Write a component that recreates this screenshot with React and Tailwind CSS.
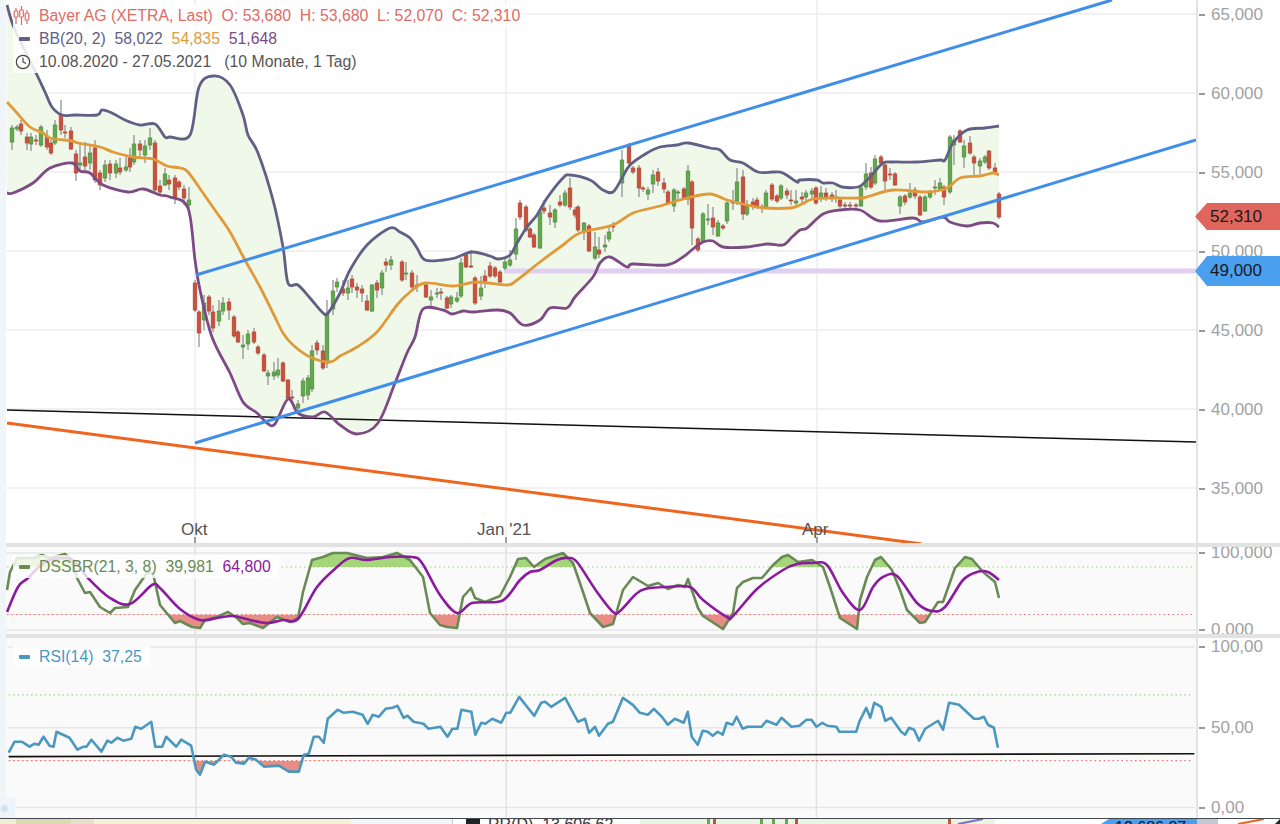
import React from 'react';
import { Clock } from 'lucide-react';

const upperBand = '7,5 15,30 37,75 45,92 52,107 62,115 75,115 97,115 102,110 112,113 125,120 140,125 155,124 165,137 170,137 190,135 199,87 213,76 230,85 243,115 248,135 258,153 273,200 283,247 288,283 298,285 310,298 323,313 328,313 340,293 350,270 367,245 390,228 400,232 410,238 417,248 425,260 443,260 455,258 472,252 490,256 498,259 510,255 517,243 527,227 537,215 547,198 563,178 570,175 590,180 603,190 613,192 622,178 630,165 647,153 660,147 677,145 688,143 710,148 720,150 730,160 743,163 758,172 773,172 783,173 797,182 800,180 817,180 823,183 833,183 842,187 858,187 865,182 872,175 883,163 893,162 917,162 940,160 945,160 953,143 967,130 985,128 999,126';
const middleBand = '7,102 17,113 30,127 43,133 50,138 72,141 78,143 100,147 113,152 133,157 153,159 167,166 180,168 188,172 203,193 217,213 230,232 245,260 260,287 273,313 283,333 293,345 310,357 330,362 340,356 357,347 377,332 397,305 410,292 425,283 453,286 477,282 507,285 517,280 540,262 563,245 580,233 613,225 633,213 660,206 687,198 710,194 727,200 747,205 765,208 790,208 800,205 813,199 833,198 860,198 870,196 893,190 927,192 947,188 960,178 980,176 993,173 999,175';
const lowerBand = '7,193 13,193 33,183 50,168 72,163 80,171 90,173 103,185 128,192 143,189 160,195 170,197 188,208 195,260 200,290 212,337 230,373 243,402 257,413 267,423 275,424 288,399 298,413 313,417 325,412 340,425 357,434 378,423 395,383 407,353 415,337 423,309 443,310 452,314 463,311 473,312 497,310 510,313 523,325 540,320 550,308 567,308 575,297 593,277 600,263 610,257 627,267 633,264 667,265 683,257 693,249 703,242 713,241 723,247 747,247 767,244 783,245 792,237 800,230 807,228 823,214 840,210 860,210 880,221 913,218 923,222 943,217 950,222 967,226 980,223 993,223 999,227';
const bandFill = upperBand + ' ' + lowerBand.split(' ').reverse().join(' ');

const dssFast = '7,590 10,572 17,558 33,558 42,555 50,558 65,554 72,560 77,578 85,593 90,592 100,607 110,613 115,608 128,607 135,590 147,573 153,573 160,605 170,617 175,623 180,621 192,627 200,628 205,620 217,617 228,612 237,618 243,624 250,623 263,628 277,617 290,622 298,618 303,592 312,560 323,557 333,553 347,553 367,558 383,557 397,553 410,560 423,577 430,613 440,625 447,627 457,628 463,597 471,588 475,598 485,602 500,596 510,577 518,559 526,558 534,567 545,559 563,553 573,563 583,592 590,613 603,627 613,624 623,590 633,577 648,586 658,583 668,589 678,585 685,587 688,579 698,608 703,616 723,629 733,613 737,588 743,582 753,578 762,578 773,565 782,557 788,555 798,562 812,560 823,567 830,587 840,618 857,629 860,600 867,577 875,560 881,557 892,570 900,590 907,610 920,623 925,622 938,602 943,602 955,568 965,557 972,559 983,572 995,582 999,598';
const dssSlow = '7,612 18,587 28,578 45,562 65,558 75,562 88,578 110,598 130,604 152,585 160,588 180,609 200,620 217,618 233,616 250,620 267,623 283,620 298,619 317,587 337,567 350,558 367,560 390,557 412,557 422,563 440,595 457,613 472,603 497,602 507,597 520,580 530,572 540,570 557,560 568,558 577,562 597,592 613,612 620,611 635,595 645,589 667,587 690,587 703,600 727,617 733,616 757,589 783,570 797,564 813,563 827,565 843,593 860,610 873,587 883,577 897,576 917,603 932,611 945,607 963,580 977,572 988,572 999,580';
const rsiLine = '7,753 13,742 20,742 28,747 33,744 37,745 42,737 48,746 52,747 55,732 68,738 76,750 82,747 85,747 90,740 100,752 106,741 110,743 116,738 122,741 130,739 134,727 140,729 150,722 154,747 161,747 165,737 175,747 180,740 190,746 195,770 199,775 204,762 213,765 223,755 230,757 235,763 243,764 248,758 255,760 263,767 278,766 288,772 298,772 303,755 308,754 313,737 318,737 323,743 327,719 337,710 343,713 352,712 362,715 367,724 372,715 378,717 385,709 392,708 397,706 403,718 407,716 413,722 423,724 428,729 440,727 447,737 452,729 457,729 461,710 471,712 475,735 481,723 485,724 492,719 501,723 506,713 510,713 519,697 534,716 541,703 545,702 551,707 565,698 578,722 585,719 589,733 595,727 599,736 608,724 613,722 623,698 633,705 640,713 648,715 654,709 662,717 668,725 675,719 684,723 688,712 692,737 698,745 703,731 708,732 713,736 718,732 723,735 727,723 733,725 737,717 743,729 748,727 762,727 767,721 777,725 782,718 792,727 800,726 807,720 812,720 817,727 823,723 828,726 837,727 840,732 857,732 860,722 867,708 871,718 875,703 882,707 886,721 892,718 902,732 906,735 910,728 915,730 920,741 926,729 939,721 944,730 950,703 960,705 975,719 980,719 985,717 989,725 995,728 999,748';

// curve through the points, the bands are rounded in the chart
const smooth = (line) => {
  const pts = line.split(' ').map((p) => p.split(',').map(Number));
  let d = `M${pts[0][0]} ${pts[0][1]}`;
  for (let i = 0; i < pts.length - 1; i++) {
    const a = pts[i - 1] || pts[i];
    const b = pts[i];
    const c = pts[i + 1];
    const e = pts[i + 2] || c;
    d += `C${b[0] + (c[0] - a[0]) / 6} ${b[1] + (c[1] - a[1]) / 6} ${c[0] - (e[0] - b[0]) / 6} ${c[1] - (e[1] - b[1]) / 6} ${c[0]} ${c[1]}`;
  }
  return d;
};

// x, wick top, body top, body bottom, wick bottom, rising
const candles = [
  [12, 125, 128, 142, 150, 1], [17, 125, 127, 129, 131, 1], [21, 120, 124, 131, 135, 0], [27, 133, 137, 143, 150, 0], [31, 133, 137, 144, 151, 1],
  [36, 135, 140, 141, 145, 0], [41, 125, 127, 145, 147, 1], [47, 130, 136, 147, 150, 0], [51, 140, 143, 153, 155, 0], [55, 120, 125, 143, 145, 1],
  [61, 100, 115, 130, 135, 0], [65, 125, 132, 133, 138, 0], [71, 127, 131, 149, 150, 0], [76, 150, 154, 173, 181, 0], [80, 142, 163, 165, 170, 1],
  [85, 142, 157, 166, 170, 0], [90, 145, 153, 163, 170, 1], [95, 140, 148, 180, 183, 0], [100, 170, 173, 185, 190, 0], [105, 160, 165, 178, 182, 1],
  [110, 160, 164, 173, 180, 0], [116, 160, 164, 173, 178, 1], [120, 158, 168, 172, 175, 0], [126, 155, 167, 170, 172, 1], [130, 148, 158, 167, 172, 0],
  [134, 135, 144, 162, 165, 1], [140, 140, 144, 150, 158, 0], [145, 140, 146, 155, 163, 1], [150, 128, 138, 145, 150, 1], [155, 140, 143, 190, 192, 0],
  [160, 180, 186, 192, 195, 0], [165, 168, 174, 185, 186, 1], [169, 175, 180, 184, 190, 0], [175, 175, 178, 197, 204, 0], [179, 180, 182, 187, 190, 0],
  [184, 185, 189, 198, 205, 0], [189, 187, 200, 205, 208, 1], [195, 280, 283, 310, 312, 0], [199, 310, 312, 333, 347, 0], [204, 295, 303, 320, 330, 1],
  [209, 295, 297, 311, 315, 0], [213, 305, 312, 328, 332, 0], [219, 300, 311, 321, 326, 1], [223, 297, 303, 311, 315, 1], [229, 298, 302, 310, 320, 0],
  [234, 315, 317, 336, 338, 0], [238, 330, 332, 342, 343, 0], [243, 335, 345, 347, 359, 1], [248, 330, 334, 344, 350, 1], [254, 328, 332, 342, 344, 0],
  [258, 345, 347, 353, 355, 0], [264, 353, 355, 371, 372, 0], [268, 370, 373, 376, 385, 1], [274, 362, 372, 376, 380, 1], [278, 358, 370, 375, 378, 1],
  [283, 361, 363, 381, 382, 0], [288, 379, 380, 398, 400, 0], [292, 390, 397, 398, 400, 0], [298, 400, 404, 408, 410, 1], [303, 378, 381, 396, 403, 1],
  [308, 375, 378, 395, 400, 1], [312, 345, 351, 389, 392, 1], [317, 340, 343, 350, 355, 0], [323, 345, 351, 368, 370, 0], [327, 300, 313, 363, 368, 1],
  [333, 280, 291, 309, 315, 1], [337, 278, 282, 287, 292, 1], [343, 280, 289, 293, 296, 0], [348, 280, 288, 293, 300, 1], [352, 275, 279, 287, 293, 0],
  [357, 283, 287, 290, 298, 0], [362, 285, 289, 293, 302, 0], [367, 295, 301, 310, 311, 0], [372, 284, 285, 311, 312, 1], [377, 280, 283, 290, 298, 0],
  [382, 270, 273, 288, 295, 1], [386, 258, 262, 265, 272, 0], [391, 256, 260, 265, 270, 1], [402, 260, 262, 280, 282, 0], [406, 262, 273, 274, 280, 1],
  [412, 270, 273, 287, 290, 0], [417, 275, 285, 286, 292, 0], [426, 283, 285, 297, 298, 0], [431, 290, 297, 300, 306, 1], [437, 288, 293, 294, 298, 1],
  [441, 288, 292, 293, 300, 0], [447, 296, 298, 308, 309, 0], [451, 295, 297, 304, 308, 1], [457, 292, 298, 301, 303, 1], [461, 258, 263, 296, 298, 1],
  [466, 252, 255, 267, 268, 0], [471, 250, 266, 267, 268, 0], [475, 276, 278, 303, 305, 0], [481, 276, 288, 296, 300, 1], [485, 270, 276, 282, 288, 0],
  [490, 262, 266, 276, 278, 0], [495, 266, 268, 276, 278, 0], [500, 270, 272, 282, 283, 0], [505, 258, 262, 268, 270, 1], [510, 250, 260, 265, 267, 1],
  [516, 218, 229, 254, 260, 1], [520, 200, 203, 217, 220, 0], [526, 205, 207, 230, 232, 0], [530, 227, 229, 237, 238, 0], [534, 233, 235, 247, 248, 0],
  [540, 210, 212, 248, 249, 1], [544, 200, 208, 211, 214, 0], [550, 205, 213, 217, 225, 0], [555, 208, 210, 222, 228, 1], [560, 195, 202, 205, 207, 0],
  [565, 190, 193, 205, 207, 1], [570, 178, 188, 207, 210, 0], [575, 207, 210, 215, 218, 0], [578, 205, 207, 230, 232, 0], [584, 222, 223, 232, 240, 1],
  [589, 224, 226, 251, 252, 0], [595, 232, 247, 258, 260, 1], [599, 237, 250, 254, 258, 0], [605, 235, 245, 247, 252, 1], [609, 225, 232, 239, 242, 1],
  [613, 222, 226, 227, 232, 0], [622, 150, 160, 183, 197, 1], [629, 143, 145, 163, 165, 0], [633, 166, 168, 172, 174, 0], [639, 165, 168, 188, 197, 0],
  [643, 186, 188, 189, 192, 0], [648, 187, 190, 194, 200, 1], [653, 170, 175, 184, 193, 1], [658, 168, 172, 181, 186, 0], [664, 178, 183, 189, 193, 0],
  [668, 190, 192, 203, 204, 0], [674, 188, 190, 206, 212, 1], [678, 190, 192, 193, 200, 1], [684, 187, 189, 199, 200, 0], [688, 165, 171, 199, 205, 1],
  [692, 180, 182, 228, 245, 0], [698, 237, 239, 250, 252, 0], [703, 212, 214, 241, 243, 1], [708, 204, 219, 220, 225, 1], [713, 207, 218, 227, 235, 0],
  [718, 220, 223, 236, 237, 1], [723, 224, 226, 228, 230, 0], [727, 200, 203, 221, 224, 1], [733, 190, 202, 203, 210, 0], [737, 168, 182, 201, 205, 1],
  [743, 170, 177, 214, 220, 0], [747, 200, 205, 214, 216, 1], [753, 198, 202, 206, 210, 0], [757, 197, 200, 207, 209, 0], [762, 204, 207, 208, 213, 0],
  [766, 190, 193, 207, 209, 1], [772, 183, 185, 199, 201, 0], [777, 194, 196, 201, 203, 0], [781, 184, 186, 198, 200, 1], [787, 188, 191, 195, 199, 0],
  [791, 190, 200, 201, 205, 0], [796, 190, 201, 203, 205, 1], [802, 192, 197, 199, 205, 0], [806, 190, 193, 197, 202, 1], [812, 188, 191, 194, 199, 1],
  [816, 186, 188, 203, 205, 0], [821, 186, 193, 198, 202, 1], [826, 188, 193, 197, 201, 0], [832, 192, 195, 198, 202, 0], [836, 190, 197, 198, 203, 1],
  [840, 198, 200, 206, 208, 0], [845, 202, 205, 206, 209, 0], [850, 202, 205, 206, 208, 0], [856, 203, 205, 206, 208, 0], [861, 186, 188, 206, 207, 1],
  [866, 163, 174, 187, 190, 1], [871, 167, 173, 187, 189, 0], [875, 155, 159, 183, 185, 1], [881, 155, 157, 163, 165, 0], [885, 163, 165, 181, 190, 0],
  [890, 168, 174, 175, 180, 0], [895, 172, 174, 185, 186, 0], [900, 195, 197, 206, 214, 1], [905, 194, 196, 202, 205, 0], [910, 183, 193, 197, 199, 1],
  [915, 187, 190, 196, 199, 0], [920, 195, 197, 215, 216, 0], [925, 195, 197, 211, 212, 1], [930, 190, 193, 197, 199, 1], [935, 180, 187, 188, 195, 1],
  [940, 178, 183, 189, 191, 1], [944, 185, 187, 197, 205, 0], [950, 135, 137, 192, 194, 1], [954, 135, 140, 145, 165, 1], [960, 129, 131, 142, 143, 0],
  [964, 140, 146, 157, 168, 1], [970, 136, 143, 153, 155, 0], [974, 155, 157, 163, 175, 0], [980, 158, 161, 166, 174, 1], [985, 155, 157, 162, 164, 1],
  [989, 150, 151, 168, 170, 0], [995, 163, 168, 173, 175, 0], [999, 192, 194, 217, 219, 0],
];

const priceTicks = [['65,000', 15], ['60,000', 94], ['55,000', 173], ['50,000', 252], ['45,000', 331], ['40,000', 410], ['35,000', 489]];
const dssTicks = [['100,000', 6], ['0,000', 83]];
const rsiTicks = [['100,00', 9], ['50,00', 90], ['0,00', 170]];

const monthLines = [195, 506, 817];

const PriceAxis = ({ ticks }) => (
  <div className="relative w-[84px] shrink-0 border-l-2 border-[#e3e3e3] bg-white overflow-hidden text-[17px] leading-5 text-[#a2a2a2]">
    {ticks.map(([label, y]) => (
      <div key={label} className="absolute left-0 flex items-center gap-[6px] h-5" style={{ top: y - 10 }}>
        <span className="w-[6px] h-[1.5px] ml-[1px] bg-[#999]" />
        <span>{label}</span>
      </div>
    ))}
  </div>
);

const PriceTag = ({ label, className }) => (
  <div className={`absolute left-[-1px] w-[85px] flex items-center pl-[15px] text-[17px] text-[#1a1a1a] [clip-path:polygon(0_50%,12px_0,100%_0,100%_100%,12px_100%)] ${className}`}>
    {label}
  </div>
);

const CandleIcon = () => (
  <svg width="17" height="22" viewBox="0 0 17 22" fill="none" stroke="#dd6c64" strokeWidth="1.2" className="shrink-0">
    <path d="M3 3v3M3 12v7M8.5 1v4M8.5 12v8M14 5v3M14 15v4" />
    <rect x="1.2" y="6" width="3.6" height="6" rx="0.8" />
    <rect x="6.7" y="5" width="3.6" height="7" rx="0.8" />
    <rect x="12.2" y="8" width="3.6" height="7" rx="0.8" />
  </svg>
);

const Swatch = ({ className }) => <span className={`w-[11px] h-[4px] rounded-[1px] shrink-0 ${className}`} />;

const MainChart = () => (
  <svg viewBox="6 0 1190 543" className="block w-full h-full">
    {[14, 93, 172, 251, 330, 409, 488].map((y) => (
      <line key={y} x1="6" x2="1196" y1={y} y2={y} stroke="#eeeeee" strokeWidth="1.5" />
    ))}
    {monthLines.map((x) => (
      <line key={x} x1={x} x2={x} y1="0" y2="543" stroke="#eeeeee" strokeWidth="1.5" />
    ))}
    <polygon points={bandFill} fill="#eff8e9" />
    <rect x="504" y="268.5" width="692" height="5" fill="#e0cff0" />
    <line x1="7" y1="410" x2="1196" y2="442" stroke="#111111" strokeWidth="1.5" />
    <line x1="7" y1="423" x2="922" y2="544" stroke="#f0641e" strokeWidth="3" />
    {candles.map(([x, wt, t, b, wb, up]) => (
      <g key={x}>
        <line x1={x} x2={x} y1={wt} y2={wb} stroke="#8a8a8a" strokeWidth="1.2" />
        <rect
          x={x - 1.8}
          y={t}
          width="3.6"
          height={b - t}
          fill={up ? '#62a84c' : '#c9503f'}
          stroke={up ? '#4f8a3c' : '#b5442f'}
          strokeWidth="0.7"
        />
      </g>
    ))}
    <path d={smooth(upperBand)} fill="none" stroke="#625f85" strokeWidth="2.8" />
    <path d={smooth(middleBand)} fill="none" stroke="#e09a3a" strokeWidth="2.8" />
    <path d={smooth(lowerBand)} fill="none" stroke="#7d4a85" strokeWidth="2.8" />
    <line x1="196" y1="275" x2="1112" y2="0" stroke="#3f8eea" strokeWidth="3" />
    <line x1="195" y1="443" x2="1196" y2="140" stroke="#3f8eea" strokeWidth="3" />
    {monthLines.map((x) => (
      <line key={x} x1={x} x2={x} y1="537" y2="543" stroke="#666666" strokeWidth="1.2" />
    ))}
  </svg>
);

const DssChart = () => (
  <svg viewBox="6 547 1190 87" className="block w-full h-full">
    <defs>
      <clipPath id="dssAbove"><rect x="6" y="547" width="1190" height="20" /></clipPath>
      <clipPath id="dssBelow"><rect x="6" y="614.5" width="1190" height="20" /></clipPath>
    </defs>
    {[553, 630].map((y) => (
      <line key={y} x1="6" x2="1196" y1={y} y2={y} stroke="#e6e6e6" strokeWidth="1.5" />
    ))}
    {monthLines.map((x) => (
      <line key={x} x1={x} x2={x} y1="547" y2="634" stroke="#e2e2e2" strokeWidth="1.5" />
    ))}
    <polygon points={`${dssFast} 999,567 7,567`} fill="#a5d67a" clipPath="url(#dssAbove)" />
    <polygon points={`${dssFast} 999,614.5 7,614.5`} fill="#e88d85" clipPath="url(#dssBelow)" />
    <line x1="7" x2="1193" y1="567" y2="567" stroke="#9fd07f" strokeWidth="1.2" strokeDasharray="1.5 3" />
    <line x1="7" x2="1193" y1="614.5" y2="614.5" stroke="#e8746c" strokeWidth="1.2" strokeDasharray="1.5 3" />
    <polyline points={dssFast} fill="none" stroke="#6a8a55" strokeWidth="2.6" strokeLinejoin="round" />
    <path d={smooth(dssSlow)} fill="none" stroke="#8a1a9e" strokeWidth="2.6" />
  </svg>
);

const RsiChart = () => (
  <svg viewBox="6 638 1190 180" className="block w-full h-full">
    <defs>
      <clipPath id="rsiBelow"><rect x="6" y="761" width="1190" height="40" /></clipPath>
    </defs>
    {[647, 728, 808].map((y) => (
      <line key={y} x1="6" x2="1196" y1={y} y2={y} stroke="#e6e6e6" strokeWidth="1.5" />
    ))}
    {monthLines.map((x) => (
      <line key={x} x1={x} x2={x} y1="638" y2="818" stroke="#e2e2e2" strokeWidth="1.5" />
    ))}
    <polygon points={`${rsiLine} 999,761 7,761`} fill="#e88d85" clipPath="url(#rsiBelow)" />
    <line x1="7" x2="1193" y1="695" y2="695" stroke="#9fd07f" strokeWidth="1.2" strokeDasharray="1.5 3" />
    <line x1="7" x2="1193" y1="761" y2="761" stroke="#e8746c" strokeWidth="1.2" strokeDasharray="1.5 3" />
    <line x1="7" y1="757" x2="1196" y2="754" stroke="#111111" strokeWidth="1.6" />
    <polyline points={rsiLine} fill="none" stroke="#4a98c0" strokeWidth="2.6" strokeLinejoin="round" />
  </svg>
);

const BottomStrip = () => (
  <div className="relative h-[5px] flex shrink-0 overflow-hidden bg-white">
    <div className="w-[16px] bg-[#eef0d0]" />
    <div className="w-[55px] bg-[#d9dab0]" />
    <div className="w-[23px] bg-[#eadfc8]" />
    <div className="w-[257px] bg-[#f2f3d6]" />
    <div className="w-[102px] border-r border-[#cccccc] bg-[#f6f6f6]" />
    <div className="w-[13px]" />
    <div className="w-[14px] bg-[#222222]" />
    <div className="w-[8px]" />
    <div className="w-[122px] mt-[-4px] text-[16px] leading-5 text-[#333333] whitespace-pre">RR(D)  13.606,62</div>
    <div className="w-[30px]" />
    <div className="w-[355px] bg-[#eaf4e3]" />
    <div className="w-[106px]" />
    <div className="w-[96px] bg-[#4a9fee] [clip-path:polygon(0_100%,8px_0,100%_0,100%_100%)] pl-[14px] text-[16px] leading-[18px] text-[#111111]">13.686,87</div>
    <div className="w-[21px] bg-[#c8c8d0]" />
    <svg viewBox="0 0 62 5" className="w-[62px] h-[5px]">
      <line x1="20" y1="5" x2="46" y2="0" stroke="#f0641e" strokeWidth="2" />
      <polygon points="57,5 62,0 62,5" fill="#222222" />
    </svg>
    <svg viewBox="0 0 1280 5" className="absolute left-0 top-0 w-[1280px] h-[5px]">
      <rect x="707" y="0" width="3" height="5" fill="#62a84c" />
      <rect x="713" y="0" width="3" height="5" fill="#c9503f" />
      <rect x="760" y="0" width="3" height="5" fill="#62a84c" />
      <rect x="772" y="0" width="3" height="5" fill="#62a84c" />
      <rect x="785" y="0" width="3" height="5" fill="#62a84c" />
      <rect x="795" y="0" width="3" height="5" fill="#c9503f" />
      <rect x="948" y="0" width="3" height="5" fill="#c9503f" />
      <line x1="958" y1="5" x2="983" y2="0" stroke="#7d6fc0" strokeWidth="2" />
    </svg>
  </div>
);

export default function App() {
  return (
    <div className="relative w-[1280px] h-[824px] flex flex-col overflow-hidden bg-white font-['Liberation_Sans',Arial,sans-serif]">
      <div className="flex flex-1 min-h-0">
        <div className="w-[6px] shrink-0 bg-[#f0f5fa]" />
        <div className="flex-1 min-w-0 flex flex-col">
          <div className="flex h-[543px]">
            <div className="relative flex-1 min-w-0">
              <MainChart />
              <div className="absolute left-[7px] top-[4px] flex flex-col text-[15.8px] leading-[23px]">
                <div className="flex items-center w-fit pr-1 bg-white/85 text-[#dd6c64] whitespace-pre">
                  <CandleIcon />
                  <span className="ml-[9px]">Bayer AG (XETRA, Last)  O: 53,680  H: 53,680  L: 52,070  C: 52,310</span>
                </div>
                <div className="flex items-center w-fit pr-1 bg-white/85 whitespace-pre">
                  <Swatch className="ml-[6px] bg-[#625f85]" />
                  <span className="ml-[9px] text-[#625f85]">BB(20, 2)  58,022  </span>
                  <span className="text-[#e09a3a]">54,835  </span>
                  <span className="text-[#7d4a85]">51,648</span>
                </div>
                <div className="flex items-center w-fit pr-1 bg-white/85 text-[#555555] whitespace-pre">
                  <Clock size={16} strokeWidth={1.8} className="text-[#444444] ml-[2px]" />
                  <span className="ml-[8px]">10.08.2020 - 27.05.2021   (10 Monate, 1 Tag)</span>
                </div>
              </div>
              <span className="absolute left-[175px] top-[520px] text-[17px] leading-5 text-[#555555]">Okt</span>
              <span className="absolute left-[471px] top-[520px] text-[17px] leading-5 text-[#555555]">Jan '21</span>
              <span className="absolute left-[796px] top-[520px] text-[17px] leading-5 text-[#555555]">Apr</span>
            </div>
            <div className="relative flex">
              <PriceAxis ticks={priceTicks} />
              <PriceTag label="52,310" className="top-[203px] h-[27px] bg-[#e0655d]" />
              <PriceTag label="49,000" className="top-[256px] h-[30px] bg-[#4a9fee]" />
            </div>
          </div>
          <div className="h-[4px] shrink-0 bg-[#e2e2e2]" />
          <div className="flex h-[87px]">
            <div className="relative flex-1 min-w-0 bg-[#fafafa]">
              <DssChart />
              <div className="absolute left-[7px] top-[8px] flex items-center h-[23px] pr-2 bg-white/80 text-[15.8px] whitespace-pre">
                <Swatch className="ml-[6px] bg-[#6a8a55]" />
                <span className="ml-[9px] text-[#6a8a55]">DSSBR(21, 3, 8)  39,981  </span>
                <span className="text-[#8a1a9e]">64,800</span>
              </div>
            </div>
            <PriceAxis ticks={dssTicks} />
          </div>
          <div className="h-[4px] shrink-0 bg-[#e2e2e2]" />
          <div className="flex flex-1 min-h-0">
            <div className="relative flex-1 min-w-0 bg-[#fafafa]">
              <RsiChart />
              <div className="absolute left-[7px] top-[8px] flex items-center h-[21px] pr-2 bg-white/80 text-[15.8px] text-[#4a98c0] whitespace-pre">
                <Swatch className="ml-[6px] bg-[#4a98c0]" />
                <span className="ml-[9px]">RSI(14)  37,25</span>
              </div>
            </div>
            <PriceAxis ticks={rsiTicks} />
          </div>
        </div>
      </div>
      <div className="h-[1.5px] shrink-0 bg-[#444a50]" />
      <BottomStrip />
      <div className="absolute left-0 top-[798px] w-[15px] h-[20px] flex items-center bg-[#eef4fa]">
        <span className="w-[7px] h-[7px] ml-[1px] rounded-full bg-[#cfe2f6]" />
      </div>
    </div>
  );
}
